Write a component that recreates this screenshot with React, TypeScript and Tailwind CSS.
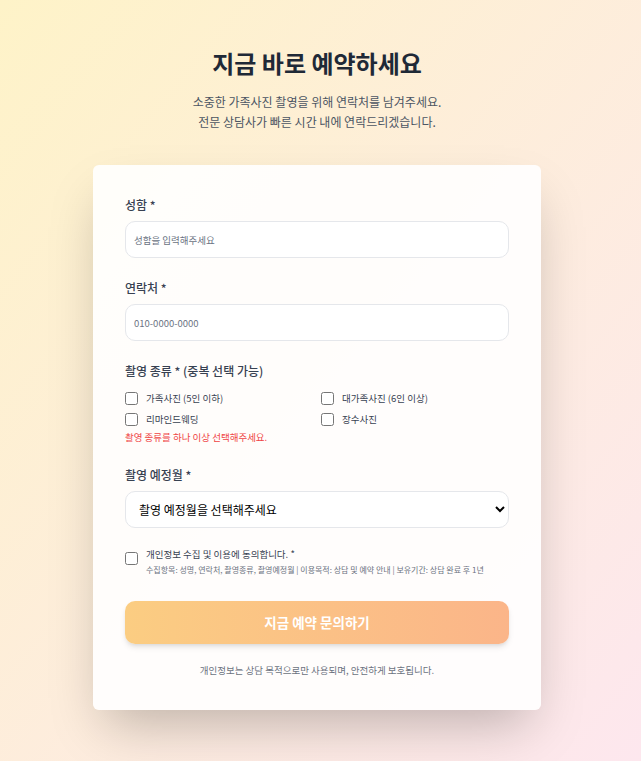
import React, { useState } from 'react';

const types = ['가족사진 (5인 이하)', '대가족사진 (6인 이상)', '리마인드웨딩', '장수사진'];

const App: React.FC = () => {
    const [checked, setChecked] = useState<string[]>([]);
    const [agree, setAgree] = useState(false);

    const toggle = (t: string) => {
        setChecked(checked.includes(t) ? checked.filter((c) => c !== t) : [...checked, t]);
    };

    return (
        <div className="min-h-[761px] bg-linear-to-br from-[#fef3c8] to-[#fde7ee] pl-4 pr-[23px] pt-[47px] pb-[51px] font-['Noto_Sans_CJK_KR',sans-serif]">
            <div className="text-center">
                <h1 className="text-[24px] font-bold leading-[32px] text-[#1f2937]">지금 바로 예약하세요</h1>
                <p className="mt-[13px] text-[12px] leading-[20px] text-[#4b5563]">
                    소중한 가족사진 촬영을 위해 연락처를 남겨주세요.
                    <br />
                    전문 상담사가 빠른 시간 내에 연락드리겠습니다.
                </p>
            </div>

            <div className="mx-auto mt-[33px] max-w-[448px] rounded-md bg-white/90 px-8 pt-[30px] pb-[33px] shadow-2xl">
                <div>
                    <label className="block text-[12px] font-medium leading-5 text-[#374151]">성함 *</label>
                    <input
                        type="text"
                        placeholder="성함을 입력해주세요"
                        className="mt-[6px] h-[37px] w-full rounded-[10px] border border-gray-200 bg-white px-2 text-[9.5px] text-gray-700 placeholder:text-gray-500 focus:outline-none"
                    />
                </div>

                <div className="mt-[20px]">
                    <label className="block text-[12px] font-medium leading-5 text-[#374151]">연락처 *</label>
                    <input
                        type="text"
                        placeholder="010-0000-0000"
                        className="mt-[6px] h-[37px] w-full rounded-[10px] border border-gray-200 bg-white px-2 text-[9.5px] text-gray-700 placeholder:text-gray-500 focus:outline-none"
                    />
                </div>

                <div className="mt-[20px]">
                    <label className="block text-[12px] font-medium leading-5 text-[#374151]">촬영 종류 * (중복 선택 가능)</label>
                    <div className="mt-[10px] grid grid-cols-2 gap-x-2 gap-y-[7px]">
                        {types.map((t) => (
                            <label key={t} className="flex h-[14px] items-center gap-2 text-[9.5px] leading-[14px] text-[#374151]">
                                <input
                                    type="checkbox"
                                    checked={checked.includes(t)}
                                    onChange={() => toggle(t)}
                                    className="m-0 h-[13px] w-[13px]"
                                />
                                {t}
                            </label>
                        ))}
                    </div>
                    <p className="mt-[4px] text-[9.5px] leading-[14px] text-[#ef4444]">촬영 종류를 하나 이상 선택해주세요.</p>
                </div>

                <div className="mt-[21px]">
                    <label className="block text-[12px] font-medium leading-5 text-[#374151]">촬영 예정월 *</label>
                    <select className="mt-[6px] h-[37px] w-full rounded-[10px] border border-gray-200 bg-white px-[9px] text-[12px] text-black focus:outline-none">
                        <option>촬영 예정월을 선택해주세요</option>
                    </select>
                </div>

                <div className="mt-[18px] flex gap-2">
                    <input
                        type="checkbox"
                        checked={agree}
                        onChange={() => setAgree(!agree)}
                        className="m-0 mt-[6px] h-[13px] w-[13px] shrink-0"
                    />
                    <div>
                        <p className="text-[9.5px] leading-[16px] text-[#374151]">개인정보 수집 및 이용에 동의합니다. *</p>
                        <p className="mt-[1px] text-[8px] leading-[14px] text-[#6b7280]">
                            수집항목: 성명, 연락처, 촬영종류, 촬영예정월 | 이용목적: 상담 및 예약 안내 | 보유기간: 상담 완료 후 1년
                        </p>
                    </div>
                </div>

                <button className="mt-[24px] h-[43px] w-full rounded-[10px] bg-linear-to-r from-[#fbcd82] to-[#fbb589] text-[13.5px] font-bold text-white shadow-md">
                    지금 예약 문의하기
                </button>

                <p className="mt-[19px] text-center text-[9.5px] leading-[14px] text-[#6b7280]">
                    개인정보는 상담 목적으로만 사용되며, 안전하게 보호됩니다.
                </p>
            </div>
        </div>
    );
};

export default App;
